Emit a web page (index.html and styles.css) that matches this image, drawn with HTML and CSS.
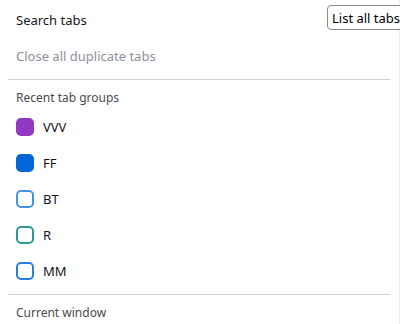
FILE: index.html
```html
<!DOCTYPE html>
<html lang="en">
<head>
    <meta charset="UTF-8">
    <title>Tab list menu</title>
    <link rel="stylesheet" href="styles.css">
</head>
<body>
    <div class="panel">
        <div class="menu-row">Search tabs</div>
        <div class="menu-row disabled">Close all duplicate tabs</div>
        <div class="separator"></div>
        <div class="section-title">Recent tab groups</div>
        <div class="group-row"><span class="swatch purple"></span>VVV</div>
        <div class="group-row"><span class="swatch blue"></span>FF</div>
        <div class="group-row"><span class="swatch outline-blue"></span>BT</div>
        <div class="group-row"><span class="swatch outline-teal"></span>R</div>
        <div class="group-row"><span class="swatch outline-mm"></span>MM</div>
        <div class="separator"></div>
        <div class="section-title">Current window</div>
    </div>
    <div class="tooltip">List all tabs</div>
</body>
</html>
```

FILE: styles.css
```css
body {
    margin: 0;
    background: #ffffff;
    color: #15141a;
    font-family: 'Noto Sans', 'Open Sans', sans-serif;
    font-size: 13px;
    width: 400px;
    height: 324px;
    overflow: hidden;
    position: relative;
}
.panel {
    padding-top: 2px;
    border-right: 1px solid #ececec;
    height: 100%;
    box-sizing: border-box;
}
.menu-row {
    height: 36px;
    display: flex;
    align-items: center;
    padding-left: 16px;
}
.menu-row.disabled {
    color: #8f8f9d;
}
.separator {
    height: 1px;
    background: #cfcfd8;
    margin: 5px 9px 5px 8px;
}
.section-title {
    height: 24px;
    display: flex;
    align-items: center;
    padding-left: 16px;
    font-size: 12px;
    color: #4a4a4f;
}
.group-row {
    height: 36px;
    display: flex;
    align-items: center;
    padding-left: 16px;
    gap: 9px;
}
.swatch {
    width: 18px;
    height: 18px;
    border-radius: 5px;
    box-sizing: border-box;
    flex-shrink: 0;
}
.purple {
    background: #9138c4;
}
.blue {
    background: #0565d6;
}
.outline-blue {
    border: 2px solid #4a90e2;
}
.outline-teal {
    border: 2px solid #2e9a93;
}
.outline-mm {
    border: 2px solid #2a7de1;
}
.tooltip {
    position: absolute;
    top: 5px;
    left: 327px;
    height: 25px;
    padding: 0 6px 0 4px;
    display: flex;
    align-items: center;
    background: #ffffff;
    border: 1px solid #8a8a8a;
    border-radius: 4px;
    box-sizing: border-box;
    white-space: nowrap;
    color: #000000;
}
```
